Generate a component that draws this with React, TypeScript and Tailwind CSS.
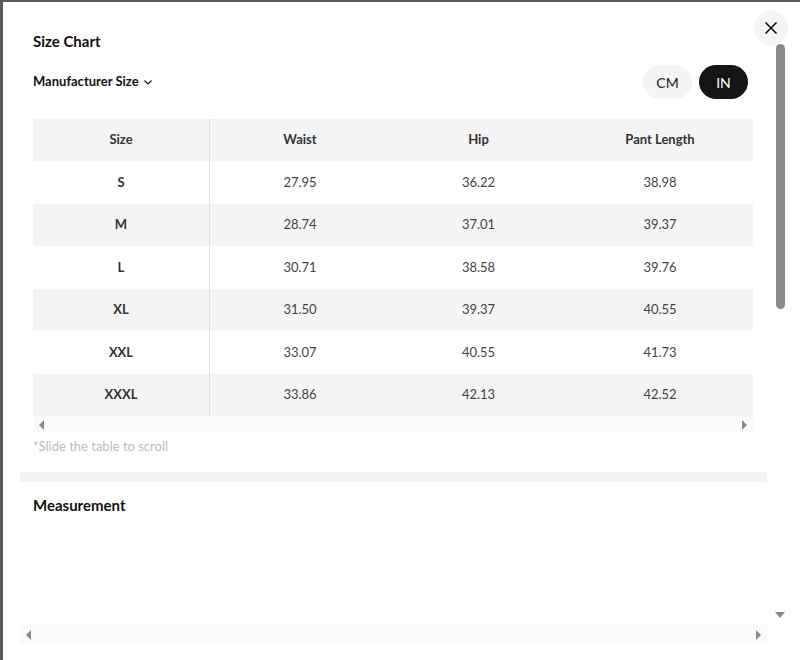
import React from "react";

const rows = [
  ["S", "27.95", "36.22", "38.98"],
  ["M", "28.74", "37.01", "39.37"],
  ["L", "30.71", "38.58", "39.76"],
  ["XL", "31.50", "39.37", "40.55"],
  ["XXL", "33.07", "40.55", "41.73"],
  ["XXXL", "33.86", "42.13", "42.52"],
];

const Arrow = ({ dir }: { dir: "l" | "r" | "d" }) => {
  if (dir === "d")
    return <div className="w-0 h-0 border-l-[5px] border-r-[5px] border-t-[6px] border-l-transparent border-r-transparent border-t-[#8a8a8a]" />;
  return dir === "l" ? (
    <div className="w-0 h-0 border-t-[5px] border-b-[5px] border-r-[5px] border-t-transparent border-b-transparent border-r-[#8a8a8a]" />
  ) : (
    <div className="w-0 h-0 border-t-[5px] border-b-[5px] border-l-[5px] border-t-transparent border-b-transparent border-l-[#8a8a8a]" />
  );
};

const App = () => {
  return (
    <div className="w-[800px] h-[660px] bg-[#5a5a5a] pt-[2px] pl-[3px] overflow-hidden" style={{ fontFamily: "Lato, 'Noto Sans', sans-serif" }}>
      <div className="relative w-full h-full bg-white flex">
        <div className="flex-1 flex flex-col">
          <div className="flex-1 pl-[17px] pr-0 overflow-hidden">
            <div className="w-[747px] px-[13px]">
              <h2 className="text-[15px] font-bold text-[#111] pt-[29px] leading-[20px]">Size Chart</h2>
              <div className="flex items-center justify-between mt-[14px] h-[34px]">
                <div className="flex items-center gap-1 text-[13px] font-bold text-[#111]">
                  Manufacturer Size
                  <svg width="10" height="10" viewBox="0 0 10 10" fill="none" stroke="#111" strokeWidth="1.2"><path d="M1.5 3.5 5 7 8.5 3.5" /></svg>
                </div>
                <div className="flex gap-[7px] mr-[6px]">
                  <div className="w-[49px] h-[34px] rounded-full bg-[#f4f4f4] flex items-center justify-center text-[14px] text-[#222]">CM</div>
                  <div className="w-[49px] h-[34px] rounded-full bg-[#151515] flex items-center justify-center text-[14px] text-white">IN</div>
                </div>
              </div>
              <div className="mt-[20px] w-[720px]">
                <div className="grid grid-cols-[177px_180px_177px_186px] h-[42px] bg-[#f4f4f4] text-[13px] font-bold text-[#333]">
                  <div className="flex items-center justify-center border-r border-[#e2e2e2]">Size</div>
                  <div className="flex items-center justify-center">Waist</div>
                  <div className="flex items-center justify-center">Hip</div>
                  <div className="flex items-center justify-center">Pant Length</div>
                </div>
                {rows.map((r, i) => (
                  <div key={r[0]} className={`grid grid-cols-[177px_180px_177px_186px] h-[42.5px] text-[13px] text-[#444] ${i % 2 ? "bg-[#f4f4f4]" : "bg-white"}`}>
                    <div className="flex items-center justify-center border-r border-[#e2e2e2] font-bold text-[#333]">{r[0]}</div>
                    <div className="flex items-center justify-center">{r[1]}</div>
                    <div className="flex items-center justify-center">{r[2]}</div>
                    <div className="flex items-center justify-center">{r[3]}</div>
                  </div>
                ))}
                <div className="h-[17px] bg-[#fafafa] flex items-center justify-between px-[6px]">
                  <Arrow dir="l" />
                  <Arrow dir="r" />
                </div>
              </div>
              <p className="text-[13px] text-[#bbb] mt-[4px]">*Slide the table to scroll</p>
            </div>
            <div className="w-[747px] h-[10px] bg-[#f4f4f4] mt-[15px]" />
            <div className="w-[747px] px-[13px]">
              <h3 className="text-[15px] font-bold text-[#111] mt-[12px]">Measurement</h3>
            </div>
          </div>
          <div className="h-[20px] mb-[15px] ml-[17px] w-[747px] bg-[#fafafa] flex items-center justify-between px-[6px]">
            <Arrow dir="l" />
            <Arrow dir="r" />
          </div>
        </div>
        <div className="w-[30px] flex flex-col items-center pt-[42px] pb-[42px] pr-[10px]">
          <div className="w-[9px] h-[265px] bg-[#8a8a8a] rounded-full" />
          <div className="flex-1" />
          <Arrow dir="d" />
        </div>
        <button className="absolute top-[9px] right-[12px] w-[34px] h-[34px] rounded-full bg-[#f4f4f4] flex items-center justify-center">
          <svg width="14" height="14" viewBox="0 0 14 14" stroke="#111" strokeWidth="1.6"><path d="M1.5 1.5 12.5 12.5M12.5 1.5 1.5 12.5" /></svg>
        </button>
      </div>
    </div>
  );
};

export default App;
